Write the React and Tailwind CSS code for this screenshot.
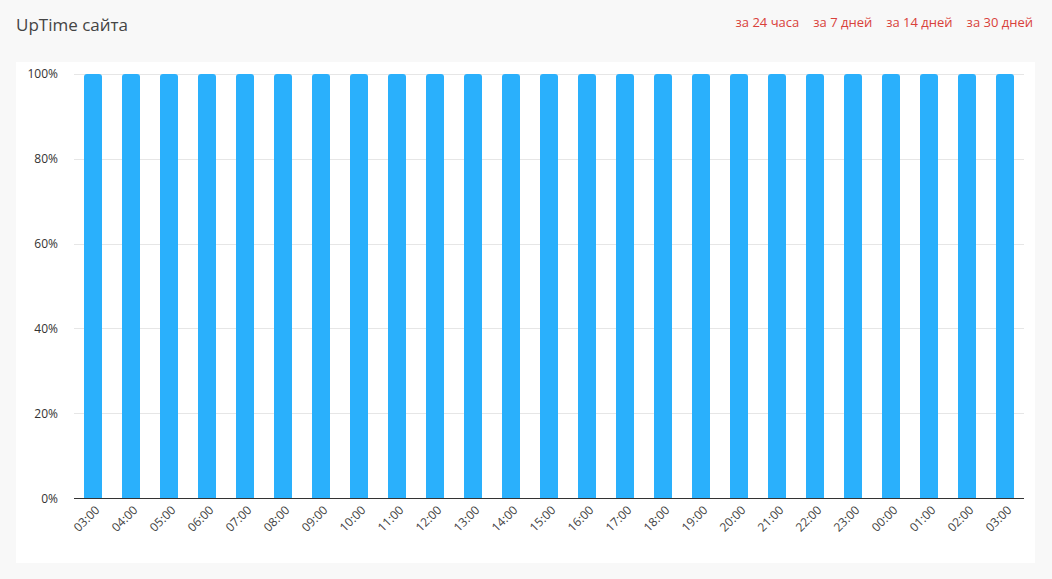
const hours = ["03:00","04:00","05:00","06:00","07:00","08:00","09:00","10:00","11:00","12:00","13:00","14:00","15:00","16:00","17:00","18:00","19:00","20:00","21:00","22:00","23:00","00:00","01:00","02:00","03:00"];
const yl = ["100%","80%","60%","40%","20%","0%"];

export default function App() {
  return (
    <div className="w-[1052px] h-[579px] bg-[#f8f8f8] overflow-hidden" style={{fontFamily:'"Open Sans", sans-serif'}}>
      <div className="flex items-start justify-between pl-4 pr-[19px] pt-[12px] h-[62px]">
        <div className="text-[17px] text-[#444]">UpTime сайта</div>
        <div className="flex gap-[14px] text-[13px] text-[#d9413a] pt-[1px]">
          <span>за 24 часа</span><span>за 7 дней</span><span>за 14 дней</span><span>за 30 дней</span>
        </div>
      </div>
      <div className="ml-4 w-[1019px] h-[501px] bg-white pt-3 flex">
        <div className="w-[58px] h-[439px] -mt-[7px] flex flex-col justify-between items-end pr-[16px] text-[12px] leading-[14px] text-[#333]">
          {yl.map(l => <span key={l}>{l}</span>)}
        </div>
        <div className="w-[950px]">
          <div className="relative h-[425px] border-b border-[#333]">
            <div className="absolute inset-0 flex flex-col">
              {[0,1,2,3,4].map(i => <div key={i} className="flex-1 border-t border-[#e6e6e6]" />)}
            </div>
            <div className="absolute inset-0 flex">
              {hours.map((h,i) => (
                <div key={i} className="w-[38px] flex justify-center">
                  <div className="w-[18px] h-full bg-[#2ab0fc] rounded-t-[3px]" />
                </div>
              ))}
            </div>
          </div>
          <div className="flex">
            {hours.map((h,i) => (
              <div key={i} className="w-[38px] relative h-[50px]">
                <span className="absolute right-1/2 top-[4px] text-[12px] leading-[14px] text-[#444] origin-top-right -rotate-45 whitespace-nowrap">{h}</span>
              </div>
            ))}
          </div>
        </div>
      </div>
    </div>
  );
}
